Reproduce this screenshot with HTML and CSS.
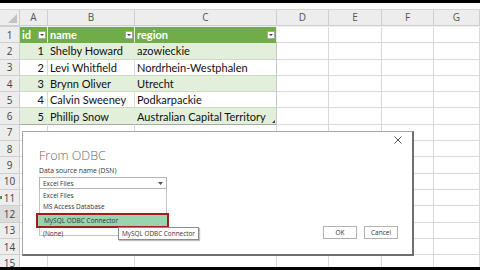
FILE: index.html
```html
<!DOCTYPE html>
<html>

<head>
    <title>From ODBC</title>
    <link rel="stylesheet" href="styles.css">
</head>

<body>
    <div class="topbar"></div>
    <div class="strip"></div>

    <div class="sheet">
        <div class="row colheads">
            <div class="corner"><span class="tri"></span></div>
            <div>A</div><div>B</div><div>C</div><div>D</div><div>E</div><div>F</div><div>G</div><div></div>
        </div>

        <div class="row">
            <div class="rh">1</div>
            <div class="th">id<span class="filter"></span></div>
            <div class="th">name<span class="filter"></span></div>
            <div class="th">region<span class="filter"></span></div>
            <div></div><div></div><div></div><div></div>
        </div>
        <div class="row band">
            <div class="rh">2</div>
            <div class="num">1</div><div>Shelby Howard</div><div>azowieckie</div>
            <div></div><div></div><div></div><div></div>
        </div>
        <div class="row plain">
            <div class="rh">3</div>
            <div class="num">2</div><div>Levi Whitfield</div><div>Nordrhein-Westphalen</div>
            <div></div><div></div><div></div><div></div>
        </div>
        <div class="row band">
            <div class="rh">4</div>
            <div class="num">3</div><div>Brynn Oliver</div><div>Utrecht</div>
            <div></div><div></div><div></div><div></div>
        </div>
        <div class="row plain">
            <div class="rh">5</div>
            <div class="num">4</div><div>Calvin Sweeney</div><div>Podkarpackie</div>
            <div></div><div></div><div></div><div></div>
        </div>
        <div class="row band last">
            <div class="rh">6</div>
            <div class="num">5</div><div>Phillip Snow</div><div class="resize">Australian Capital Territory</div>
            <div></div><div></div><div></div><div></div>
        </div>
        <div class="row"><div class="rh">7</div><div></div><div></div><div></div><div></div><div></div><div></div><div></div></div>
        <div class="row"><div class="rh">8</div><div></div><div></div><div></div><div></div><div></div><div></div><div></div></div>
        <div class="row"><div class="rh">9</div><div></div><div></div><div></div><div></div><div></div><div></div><div></div></div>
        <div class="row"><div class="rh">10</div><div></div><div></div><div></div><div></div><div></div><div></div><div></div></div>
        <div class="row"><div class="rh mark">11</div><div></div><div></div><div></div><div></div><div></div><div></div><div></div></div>
        <div class="row"><div class="rh sel">12</div><div></div><div></div><div></div><div></div><div></div><div></div><div></div></div>
        <div class="row"><div class="rh">13</div><div></div><div></div><div></div><div></div><div></div><div></div><div></div></div>
        <div class="row"><div class="rh">14</div><div></div><div></div><div></div><div></div><div></div><div></div><div></div></div>
        <div class="row"><div class="rh">15</div><div></div><div></div><div></div><div></div><div></div><div></div><div></div></div>
    </div>

    <div class="bottombar"></div>

    <div class="dialog">
        <svg class="close" width="8" height="8" viewBox="0 0 8 8">
            <path d="M0.5 0.5 L7.5 7.5 M7.5 0.5 L0.5 7.5" stroke="#555" stroke-width="1" fill="none"/>
        </svg>
        <div class="title">From ODBC</div>
        <div class="label">Data source name (DSN)</div>
        <div class="select">
            <span>Excel Files</span>
            <svg width="5" height="3" viewBox="0 0 5 3"><path d="M0 0 L5 0 L2.5 3 Z" fill="#555"/></svg>
        </div>
        <div class="list">
            <div class="item">Excel Files</div>
            <div class="item">MS Access Database</div>
            <div class="item hl">MySQL ODBC Connector</div>
            <div class="item">(None)</div>
        </div>
        <div class="buttons">
            <button>OK</button>
            <button>Cancel</button>
        </div>
        <div class="tooltip">MySQL ODBC Connector</div>
    </div>
</body>

</html>
```

FILE: styles.css
```css
body {
    margin: 0;
    width: 480px;
    height: 270px;
    overflow: hidden;
    background: #fff;
    font-family: Lato, "Liberation Sans", sans-serif;
}

.topbar {
    height: 3px;
    background: #000;
}

.strip {
    height: 6px;
    background: #fbfbfb;
    border-bottom: 1px solid #d6d6d6;
}

.bottombar {
    height: 3px;
    background: #000;
}

.sheet {
    height: 257px;
    overflow: hidden;
}

.row {
    display: grid;
    grid-template-columns: 20px 28px 87px 142px 52px 53px 52px 46px;
    height: 16.3px;
    font-size: 11px;
    color: #111;
}

.row > div {
    border-right: 1px solid #d9d9d9;
    border-bottom: 1px solid #d9d9d9;
    box-sizing: border-box;
    display: flex;
    align-items: center;
    padding-left: 2px;
    white-space: nowrap;
    overflow: hidden;
    position: relative;
}

.colheads {
    height: 17px;
    background: #ededed;
    color: #555;
    font-family: "Open Sans", sans-serif;
    font-size: 10px;
}

.colheads > div {
    justify-content: center;
    padding-left: 0;
    border-color: #cfcfcf;
}

.corner .tri {
    position: absolute;
    right: 2px;
    bottom: 2px;
    width: 0;
    height: 0;
    border-left: 9px solid transparent;
    border-bottom: 9px solid #c2c2c2;
}

.row .rh {
    background: #ededed;
    color: #444;
    justify-content: center;
    padding-left: 0;
    font-family: "Open Sans", sans-serif;
    font-size: 10px;
    border-color: #cfcfcf;
}

.row .rh.sel {
    background: #dcdcdc;
}

.row .rh.mark::before {
    content: "";
    position: absolute;
    left: 0;
    top: 6px;
    width: 2px;
    height: 3px;
    background: #3a9a40;
}

.row .th {
    background: #70ad47;
    color: #fff;
    font-weight: bold;
    border-color: #70ad47;
    border-right-color: #e6f0df;
}

.filter {
    position: absolute;
    right: 1px;
    top: 4px;
    width: 8px;
    height: 8px;
    box-sizing: border-box;
    background: #fff;
    border: 1px solid #aaa;
}

.filter::after {
    content: "";
    position: absolute;
    left: 1px;
    top: 2px;
    border-left: 2px solid transparent;
    border-right: 2px solid transparent;
    border-top: 2px solid #444;
}

.band > div {
    background: #e2efda;
    border-right-color: #e2efda;
}

.plain > div,
.band > div {
    border-bottom-color: #c9dcbc;
}

.band > div:nth-child(4),
.plain > div:nth-child(4) {
    border-right-color: #c6c6c6;
}

.band > .rh,
.plain > .rh {
    border-bottom-color: #cfcfcf;
}

.band > div:nth-child(n+5) {
    background: #fff;
    border-right-color: #d9d9d9;
    border-bottom-color: #d9d9d9;
}

.plain > div:nth-child(n+5) {
    border-bottom-color: #d9d9d9;
}

.last > div:nth-child(-n+4):not(.rh) {
    border-bottom-color: #a8a8a8;
}

.row .num {
    justify-content: flex-end;
    padding-right: 3px;
}

.resize::after {
    content: "";
    position: absolute;
    right: 1px;
    bottom: 1px;
    width: 0;
    height: 0;
    border-left: 3px solid transparent;
    border-bottom: 3px solid #335;
}

/* dialog */

.dialog {
    position: absolute;
    left: 22px;
    top: 131px;
    width: 392px;
    height: 125px;
    box-sizing: border-box;
    background: #fff;
    border: 1px solid #a6a6a6;
    border-right: 2px solid #6f6f6f;
    border-bottom: 2px solid #6f6f6f;
    font-family: "Open Sans", sans-serif;
    color: #333;
}

.close {
    position: absolute;
    right: 10px;
    top: 4px;
}

.title {
    margin: 16px 0 0 16px;
    font-size: 12.5px;
    font-weight: 300;
    color: #6a6a6a;
    line-height: 15px;
}

.label {
    margin: 3px 0 0 16px;
    font-size: 6.8px;
    line-height: 9px;
    color: #333;
}

.select {
    margin: 2px 0 0 16px;
    width: 128px;
    height: 12px;
    box-sizing: border-box;
    border: 1px solid #b5b5b5;
    display: flex;
    align-items: center;
    justify-content: space-between;
    padding: 0 3px;
    font-size: 6.5px;
}

.list {
    margin: 0 0 0 16px;
    width: 128px;
    height: 47px;
    box-sizing: border-box;
    border: 1px solid #c4c4c4;
    border-top: none;
    padding-top: 1px;
    font-size: 6.5px;
    position: relative;
}

.item {
    height: 11.3px;
    line-height: 11.3px;
    padding-left: 3px;
}

.item.hl {
    margin: 0 -3px 0 -4px;
    padding-left: 6px;
    height: 15px;
    line-height: 12px;
    box-sizing: border-box;
    background: #98d4ae;
    border: 2px solid #a51c1c;
}

.buttons {
    position: absolute;
    left: 300px;
    top: 94px;
    display: flex;
    gap: 7px;
}

.buttons button {
    width: 34px;
    height: 13px;
    padding: 0;
    background: #fff;
    border: 1px solid #b0b0b0;
    font-family: "Open Sans", sans-serif;
    font-size: 6.5px;
    color: #333;
}

.tooltip {
    position: absolute;
    left: 95px;
    top: 95px;
    padding: 1px 3px;
    background: #fff;
    border: 1px solid #8c8c8c;
    box-shadow: 1px 1px 1px rgba(0, 0, 0, 0.25);
    font-size: 6.4px;
    line-height: 9px;
    color: #333;
    white-space: nowrap;
}
```
